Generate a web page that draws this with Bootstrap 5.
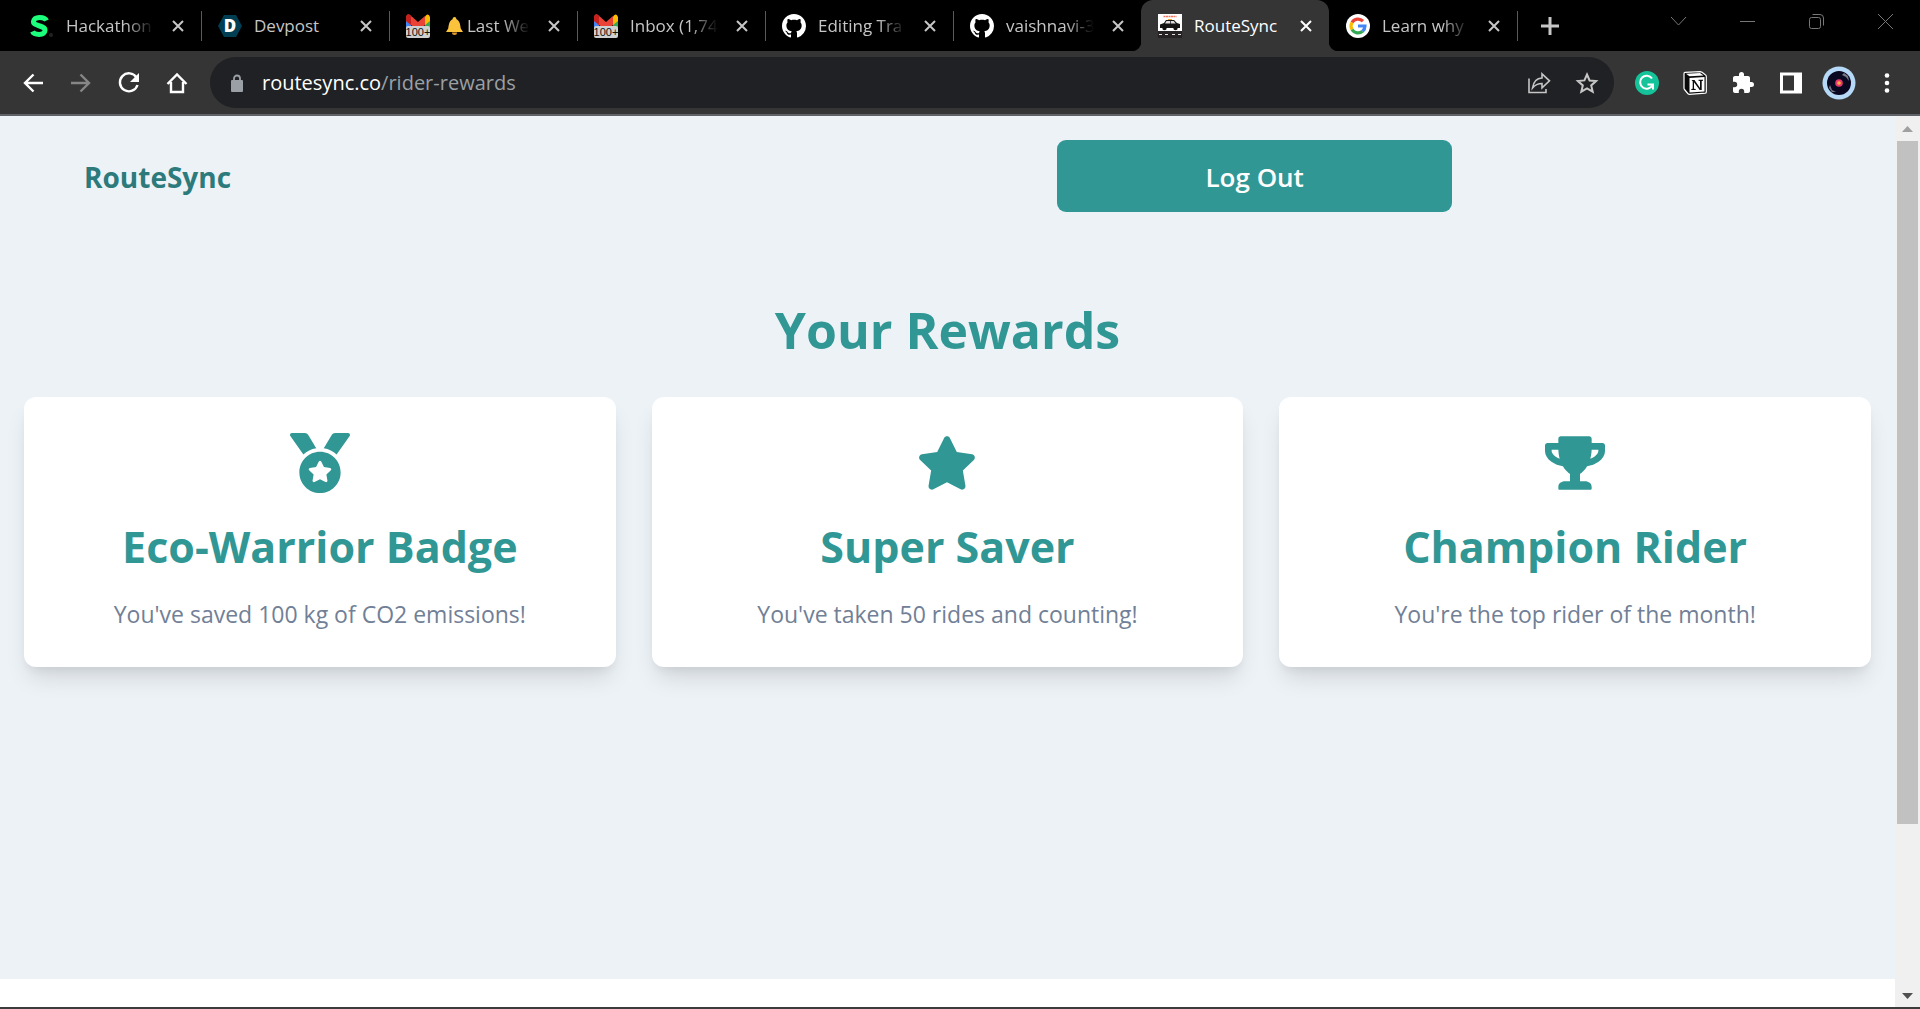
<!DOCTYPE html>
<html lang="en">
<head>
<meta charset="utf-8">
<meta name="viewport" content="width=device-width, initial-scale=1">
<title>RouteSync</title>
<link href="https://cdn.jsdelivr.net/npm/bootstrap@5.3.0/dist/css/bootstrap.min.css" rel="stylesheet">
<style>
  :root { --teal: #319795; --chrome: #353535; --page: #edf2f7; }
  body { font-family: "Open Sans", "Noto Sans", sans-serif; background: #fff; }
  svg { display: block; flex: none; }
  button.plain { border: 0; background: none; padding: 0; color: inherit; }
  .tabstrip { height: 51px; background: #000; padding-left: 13px; }
  .tab-item { flex: 0 0 188px; height: 51px; padding-left: 17px; color: #c6c6c6; position: relative; }
  .tab-item.ruled::after { content: ""; position: absolute; right: -1px; top: 11px; width: 1px; height: 30px; background: #5a5a5a; }
  .tab-item.current { background: var(--chrome); color: #fff; border-radius: 12px 12px 0 0; }
  .tab-item.current::before, .tab-item.current::after { content: ""; position: absolute; bottom: 0; width: 10px; height: 10px; }
  .tab-item.current::before { left: -10px; background: radial-gradient(circle at 0 0, #000 10px, var(--chrome) 11px); }
  .tab-item.current::after { right: -10px; background: radial-gradient(circle at 100% 0, #000 10px, var(--chrome) 11px); }
  .tab-title { flex: 0 0 88px; margin: 0 16px 0 12px; font-size: 17px; line-height: 24px; color: inherit; text-decoration: none; white-space: nowrap; overflow: hidden; }
  .tab-title.fade-end { -webkit-mask-image: linear-gradient(90deg, #000 68%, transparent); mask-image: linear-gradient(90deg, #000 68%, transparent); }
  .win-controls { gap: 46px; padding: 10px 23px 0 0; color: #777; }
  .toolbar { height: 65px; background: var(--chrome); border-bottom: 2px solid #5f6368; padding: 0 21px; gap: 24px; color: #fff; }
  .profile-btn { margin: 0 -5px; }
  .omnibox { background: #202124; border-radius: 26px; height: 51px; margin: 0 -3px; padding: 0 15px 0 18px; color: #c6c6c6; }
  .address { font-size: 20px; line-height: 28px; color: #fff; }
  .address .path { color: #9aa0a6; }
  .viewport-row { min-height: 0; border-bottom: 2px solid #3c3c3c; }
  .rewards-page { background: var(--page); margin-bottom: 28px; }
  .site-nav { padding: 24px 0; }
  .brand-cell { flex: 0 0 56%; padding: 2px 0 0 84px; margin-right: -4px; }
  .brand-link { font-size: 28px; line-height: 36px; font-weight: 700; color: #2c7a7b; text-decoration: none; }
  .logout { width: 21%; max-width: 395px; height: 72px; padding-top: 8px; border-radius: 9px; background: var(--teal); color: #fff; font-size: 26px; font-weight: 600; }
  .logout:hover { background: #2c7a7b; color: #fff; }
  .page-title { font-size: 50px; line-height: 64px; font-weight: 700; color: var(--teal); margin: 62px 0 35px; }
  .reward-grid { display: grid; grid-template-columns: repeat(3, 1fr); gap: 36px; padding: 0 24px; }
  .reward { border: 0; border-radius: 12px; padding: 36px 36px 35px; align-items: center; text-align: center; box-shadow: 0 15px 23px -5px rgba(0,0,0,.12), 0 6px 9px -3px rgba(0,0,0,.06); }
  .reward svg { fill: var(--teal); }
  .reward h2 { font-size: 43px; line-height: 54px; font-weight: 700; color: var(--teal); margin: 27px 0 22px; }
  .reward p { font-size: 23px; line-height: 36px; color: #718096; margin: 0; }
  .scroll-rail { width: 25px; background: #f0f0f0; padding: 10px 2px 8px; }
  .scroll-thumb { flex: 0 1 683px; background: #c1c1c1; margin-top: 9px; }
</style>
</head>
<body class="d-flex flex-column vh-100 overflow-hidden">

<svg width="0" height="0" class="position-absolute" aria-hidden="true">
  <symbol id="x" viewBox="0 0 16 16"><path d="M3 3l10 10M13 3L3 13" stroke="currentColor" stroke-width="2" fill="none"/></symbol>
  <symbol id="gmail" viewBox="0 0 24 24">
    <path d="M0 3h5v16H0z" fill="#4285f4"/><path d="M19 3h5v16h-5z" fill="#34a853"/>
    <path d="M19 5V2.500Q22-1.500 24 3v4l-5 4z" fill="#fbbc04"/><path d="M0 7V3q1-4 4-2l8 7 7-6v9l-7 5.500L5 11z" fill="#ea4335"/><path d="M0 7V3q1-4 4-2l1 1v9z" fill="#c5221f"/>
    <rect y="12" width="24" height="12" rx="2" fill="#d0d0d0"/>
    <text x="12" y="22" font-family="Liberation Sans, sans-serif" font-size="11" text-anchor="middle" fill="#111">100+</text>
  </symbol>
  <symbol id="github" viewBox="0 0 16 16"><circle cx="8" cy="8" r="7.500" fill="#000"/><path fill="#fff" d="M8 0C3.580 0 0 3.580 0 8c0 3.540 2.290 6.530 5.470 7.590.4.070.55-.17.55-.38 0-.19-.01-.82-.01-1.490-2.010.37-2.530-.49-2.690-.94-.09-.23-.48-.94-.82-1.130-.28-.15-.68-.52-.01-.53.63-.01 1.080.58 1.230.82.72 1.210 1.870.87 2.330.66.07-.52.28-.87.51-1.070-1.780-.2-3.640-.89-3.640-3.950 0-.87.31-1.590.82-2.150-.08-.2-.36-1.020.08-2.120 0 0 .67-.21 2.200.82.64-.18 1.320-.27 2-.27s1.360.09 2 .27c1.530-1.040 2.200-.82 2.200-.82.44 1.100.16 1.920.08 2.120.51.56.82 1.270.82 2.150 0 3.070-1.870 3.750-3.650 3.950.29.25.54.73.54 1.480 0 1.070-.01 1.930-.01 2.200 0 .21.15.46.55.38A8.010 8.010 0 0 0 16 8c0-4.420-3.580-8-8-8z"/></symbol>
</svg>

<header>
  <div class="tabstrip d-flex">
    <div class="tab-item ruled d-flex align-items-center">
      <svg width="24" height="24" viewBox="0 0 24 24"><path d="M16.500 6.500C15 3 4.500 1.500 3.500 7.500c-.6 5 12 3.500 11.500 9-.6 5.500-11 4.500-12.500 1" fill="none" stroke="#1bff7c" stroke-width="5"/><circle cx="21" cy="21" r="2" fill="#222"/></svg>
      <a href="#" class="tab-title fade-end">Hackathon</a>
      <button class="plain" aria-label="Close tab"><svg width="16" height="16"><use href="#x"/></svg></button>
    </div>
    <div class="tab-item ruled d-flex align-items-center">
      <svg width="24" height="24" viewBox="0 0 24 24"><path d="M6 1h12l6 11-6 11H6L0 12z" fill="#003e54"/><text x="12" y="18" text-anchor="middle" font-family="Open Sans, sans-serif" font-weight="800" font-size="17" fill="#fff">D</text></svg>
      <a href="#" class="tab-title">Devpost</a>
      <button class="plain" aria-label="Close tab"><svg width="16" height="16"><use href="#x"/></svg></button>
    </div>
    <div class="tab-item ruled d-flex align-items-center">
      <svg width="24" height="24"><use href="#gmail"/></svg>
      <a href="#" class="tab-title fade-end d-flex align-items-center ps-1"><svg width="17" height="18" viewBox="0 0 17 18" class="me-1"><path d="M8.500 0c1.500 0 1.800 1 1.800 2 4 2 4 7 4.500 9.500L17 15H0l2.200-3.500C2.700 9 2.700 4 6.700 2c0-1 .3-2 1.800-2z" fill="#fbc23c"/><path d="M6 15.500h5a2.500 2.500 0 0 1-5 0z" fill="#e59a2c"/></svg>Last We</a>
      <button class="plain" aria-label="Close tab"><svg width="16" height="16"><use href="#x"/></svg></button>
    </div>
    <div class="tab-item ruled d-flex align-items-center">
      <svg width="24" height="24"><use href="#gmail"/></svg>
      <a href="#" class="tab-title fade-end">Inbox (1,74</a>
      <button class="plain" aria-label="Close tab"><svg width="16" height="16"><use href="#x"/></svg></button>
    </div>
    <div class="tab-item ruled d-flex align-items-center">
      <svg width="24" height="24"><use href="#github"/></svg>
      <a href="#" class="tab-title fade-end">Editing Tra</a>
      <button class="plain" aria-label="Close tab"><svg width="16" height="16"><use href="#x"/></svg></button>
    </div>
    <div class="tab-item d-flex align-items-center">
      <svg width="24" height="24"><use href="#github"/></svg>
      <a href="#" class="tab-title fade-end">vaishnavi-3</a>
      <button class="plain" aria-label="Close tab"><svg width="16" height="16"><use href="#x"/></svg></button>
    </div>
    <div class="tab-item current d-flex align-items-center">
      <svg width="24" height="24" viewBox="0 0 24 24"><path d="M0 0h24v17H0z" fill="#fff"/><path d="M0 17h24v7H0z" fill="#262223"/><path d="M5.500 2.500h13" stroke="#f0745a" stroke-width="1.500" stroke-dasharray="2 .5"/><path d="M2 10.500l4-1.500 2-3h8l3 3 3 1v4H2z" fill="#151515"/><path d="M8.500 7H12v2.500H7zM12.700 7h3l2 2.500h-5z" fill="#ddd"/><path d="M10 5h4v1h-4z" fill="#f5a623"/><circle cx="6.500" cy="14" r="2.200" fill="#111"/><circle cx="17.500" cy="14" r="2.200" fill="#111"/><path d="M1 20.500h3m3 0h3m4 0h3m3 0h3" stroke="#ddd" stroke-width="1"/></svg>
      <a href="#" class="tab-title">RouteSync</a>
      <button class="plain" aria-label="Close tab"><svg width="16" height="16"><use href="#x"/></svg></button>
    </div>
    <div class="tab-item ruled d-flex align-items-center">
      <svg width="24" height="24" viewBox="0 0 24 24"><circle cx="12" cy="12" r="12" fill="#fff"/><g fill="none" stroke-width="3.200"><path d="M17 7.200A7 7 0 0 0 6 8.500" stroke="#ea4335"/><path d="M6 8.500a7 7 0 0 0 0 7" stroke="#fbbc04"/><path d="M6 15.500a7 7 0 0 0 10.600 1.700" stroke="#34a853"/><path d="M16.600 17.200A7 7 0 0 0 19 12h-7" stroke="#4285f4"/></g></svg>
      <a href="#" class="tab-title fade-end">Learn why</a>
      <button class="plain" aria-label="Close tab"><svg width="16" height="16"><use href="#x"/></svg></button>
    </div>
    <button class="plain text-light ms-4 px-0" aria-label="New tab"><svg width="18" height="18" viewBox="0 0 18 18"><path d="M9 0v18M0 9h18" stroke="#c6c6c6" stroke-width="3"/></svg></button>
    <div class="win-controls d-flex align-items-start ms-auto">
      <button class="plain" aria-label="Search tabs"><svg width="23" height="23" viewBox="0 0 23 23"><path d="M4 7l7.500 8L19 7" fill="none" stroke="currentColor"/></svg></button>
      <button class="plain" aria-label="Minimize"><svg width="23" height="23" viewBox="0 0 23 23"><path d="M4 11.500h15" stroke="currentColor"/></svg></button>
      <button class="plain" aria-label="Restore"><svg width="23" height="23" viewBox="0 0 23 23"><rect x="4.500" y="7.500" width="11" height="11" rx="2" fill="none" stroke="currentColor"/><path d="M7.500 4.500H15q3.500 0 3.500 3.500v7.500" fill="none" stroke="currentColor"/></svg></button>
      <button class="plain" aria-label="Close window"><svg width="23" height="23" viewBox="0 0 23 23"><path d="M4 4l15 15M19 4L4 19" stroke="currentColor"/></svg></button>
    </div>
  </div>

  <div class="toolbar d-flex align-items-center">
    <button class="plain" aria-label="Back"><svg width="24" height="24" viewBox="0 0 24 24"><path d="M22 12H4M12.500 3.500L4 12l8.500 8.500" fill="none" stroke="#fff" stroke-width="2.400"/></svg></button>
    <button class="plain" aria-label="Forward"><svg width="24" height="24" viewBox="0 0 24 24"><path d="M2 12h18M11.500 3.500L20 12l-8.500 8.500" fill="none" stroke="#868686" stroke-width="2.400"/></svg></button>
    <button class="plain" aria-label="Reload"><svg width="24" height="24" viewBox="0 0 24 24"><path d="M19.500 6.500A9 9 0 1 0 20.500 14" fill="none" stroke="#fff" stroke-width="2.400"/><path d="M22 2v9h-9z" fill="#fff"/></svg></button>
    <button class="plain" aria-label="Home"><svg width="24" height="24" viewBox="0 0 24 24"><path d="M2.500 13L12 3.500l9.500 9.500M6 11v10h12V11" fill="none" stroke="#fff" stroke-width="2.400"/></svg></button>
    <div class="omnibox flex-grow-1 d-flex align-items-center">
      <svg width="18" height="24" viewBox="0 0 18 24"><path d="M4 9h10q1 0 1 1v10q0 1-1 1H4q-1 0-1-1V10q0-1 1-1z" fill="#9aa0a6"/><path d="M6 10V7.500a3 3 0 0 1 6 0V10" fill="none" stroke="#9aa0a6" stroke-width="1.800"/></svg>
      <a href="#" class="address text-decoration-none ms-3 me-auto">routesync.co<span class="path">/rider-rewards</span></a>
      <button class="plain me-4" aria-label="Share"><svg width="24" height="24" viewBox="0 0 24 24"><path d="M2 7.500V21.500h17V18" fill="none" stroke="currentColor" stroke-width="1.600"/><path d="M5.500 17C6.500 10 10 7.300 15 7V2.800l7.500 7-7.500 7V12.500c-4.500 0-7 1.500-9.500 4.500z" fill="none" stroke="currentColor" stroke-width="1.600"/></svg></button>
      <button class="plain" aria-label="Bookmark"><svg width="24" height="24" viewBox="0 0 24 24"><path d="M12 3.500l2.600 6 6.500.6-4.900 4.300 1.500 6.300-5.700-3.400-5.700 3.400 1.500-6.300L2.900 10l6.500-.6z" fill="none" stroke="currentColor" stroke-width="2"/></svg></button>
    </div>
    <button class="plain" aria-label="Grammarly"><svg width="24" height="24" viewBox="0 0 24 24"><circle cx="12" cy="12" r="12" fill="#15c39a"/><path d="M17 7.500A6.500 6.500 0 1 0 17.500 14M12.500 13.500h5.500v5" fill="none" stroke="#fff" stroke-width="2"/></svg></button>
    <button class="plain" aria-label="Notion"><svg width="24" height="24" viewBox="0 0 24 24"><path d="M1 2.500Q1 1.500 2 1.400L17 .6q1 0 2 .7l3.300 2.500q1 .7 1 1.700v15.500q0 1-1 1.100L6.500 23.300q-1 0-1.700-.8L1.500 18.500Q1 18 1 17z" fill="#0a0a0a" stroke="#fff" stroke-width="1.200"/><path d="M6.500 7l15-.9v14.400l-15 .9z" fill="#fff"/><path d="M3 2.800l14-.8 3.500 2.500-14 .8z" fill="#fff"/><path d="M8.500 9h3l5.500 8V10l-1.500-.3V8.700h4.500v1l-1.300.3v9h-2L11 11.200v6.600l1.700.3v1H8.300v-1l1.400-.3V10.300z" fill="#0a0a0a"/></svg></button>
    <button class="plain" aria-label="Extensions"><svg width="24" height="24" viewBox="0 0 24 24"><path d="M20.500 11H19V7c0-1.100-.9-2-2-2h-4V3.500a2.500 2.500 0 0 0-5 0V5H4c-1.100 0-2 .9-2 2v3.800h1.500a2.700 2.700 0 0 1 0 5.400H2V20c0 1.100.9 2 2 2h3.800v-1.500a2.700 2.700 0 0 1 5.400 0V22H17c1.100 0 2-.9 2-2v-4h1.500a2.500 2.500 0 0 0 0-5z" fill="#fff"/></svg></button>
    <button class="plain" aria-label="Side panel"><svg width="24" height="24" viewBox="0 0 24 24"><path d="M1 1.500h22v21H1zM4 4.500v15h11v-15z" fill="#fff" fill-rule="evenodd"/></svg></button>
    <button class="plain profile-btn" aria-label="Profile"><svg width="34" height="34" viewBox="0 0 34 34"><circle cx="17" cy="17" r="16.500" fill="#b5d9f7"/><circle cx="17" cy="17" r="12" fill="#0a0820"/><path d="M20 9l4 2 3 4-1-5-4-3zM8 19l2 5 4 2-4 0-3-4z" fill="#777a86"/><circle cx="17" cy="17" r="3.800" fill="#e8366f"/><circle cx="17" cy="17" r="1.800" fill="#ffb13b"/></svg></button>
    <button class="plain" aria-label="Menu"><svg width="24" height="24" viewBox="0 0 24 24" fill="#fff"><circle cx="12" cy="4.500" r="2.300"/><circle cx="12" cy="12" r="2.300"/><circle cx="12" cy="19.500" r="2.300"/></svg></button>
  </div>
</header>

<div class="viewport-row d-flex flex-grow-1">
  <main class="rewards-page flex-grow-1">
    <nav class="site-nav d-flex align-items-center">
      <div class="brand-cell"><a href="#" class="brand-link">RouteSync</a></div>
      <button class="btn logout">Log Out</button>
    </nav>
    <h1 class="page-title text-center">Your Rewards</h1>
    <section class="reward-grid">
      <article class="card reward">
        <svg width="60" height="60" viewBox="0 0 512 512"><path d="M223.750 130.750L154.620 15.540A31.997 31.997 0 0 0 127.180 0H16.030C3.080 0-4.500 14.570 2.920 25.180l111.270 158.960c29.720-27.770 67.520-46.830 109.560-53.390zM495.970 0H384.820c-11.240 0-21.660 5.900-27.440 15.540l-69.130 115.210c42.040 6.560 79.840 25.620 109.560 53.380L509.080 25.180C516.500 14.570 508.920 0 495.970 0zM256 160c-97.200 0-176 78.800-176 176s78.800 176 176 176 176-78.800 176-176-78.800-176-176-176zm92.520 157.260l-37.930 36.960 8.970 52.220c1.600 9.360-8.260 16.510-16.650 12.090L256 393.880l-46.900 24.650c-8.400 4.450-18.250-2.740-16.650-12.090l8.970-52.220-37.930-36.960c-6.820-6.640-3.050-18.230 6.350-19.590l52.430-7.640 23.430-47.520c2.110-4.280 6.190-6.390 10.280-6.390 4.110 0 8.220 2.140 10.330 6.390l23.430 47.520 52.430 7.640c9.400 1.360 13.170 12.950 6.350 19.590z"/></svg>
        <h2>Eco-Warrior Badge</h2>
        <p>You've saved 100 kg of CO2 emissions!</p>
      </article>
      <article class="card reward">
        <svg width="60" height="60" viewBox="0 0 576 512"><path d="M259.300 17.800L194 150.200 47.900 171.500c-26.200 3.800-36.700 36.100-17.700 54.600l105.700 103-25 145.500c-4.500 26.300 23.200 46 46.400 33.700L288 439.600l130.700 68.700c23.200 12.200 50.900-7.400 46.400-33.700l-25-145.500 105.700-103c19-18.500 8.500-50.800-17.700-54.600L382 150.200 316.700 17.800c-11.700-23.600-45.600-23.900-57.400 0z"/></svg>
        <h2>Super Saver</h2>
        <p>You've taken 50 rides and counting!</p>
      </article>
      <article class="card reward">
        <svg width="60" height="60" viewBox="0 0 576 512"><path d="M552 64H448V24c0-13.300-10.700-24-24-24H152c-13.300 0-24 10.700-24 24v40H24C10.700 64 0 74.700 0 88v56c0 35.700 22.500 72.400 61.900 100.700 31.500 22.700 69.800 37.100 110 41.700C203.300 338.500 240 360 240 360v72h-48c-35.300 0-64 20.700-64 56v12c0 6.600 5.400 12 12 12h296c6.600 0 12-5.400 12-12v-12c0-35.300-28.700-56-64-56h-48v-72s36.700-21.500 68.100-73.600c40.300-4.600 78.600-19 110-41.700 39.300-28.300 61.900-65 61.900-100.700V88c0-13.300-10.700-24-24-24zM99.300 192.800C74.900 175.200 64 155.600 64 144v-16h64.200c1 32.600 5.800 61.200 12.800 86.200-15.100-5.200-29.200-12.400-41.700-21.400zM512 144c0 16.100-17.700 36.100-35.300 48.800-12.500 9-26.700 16.200-41.800 21.400 7-25 11.800-53.600 12.800-86.200H512v16z"/></svg>
        <h2>Champion Rider</h2>
        <p>You're the top rider of the month!</p>
      </article>
    </section>
  </main>
  <div class="scroll-rail d-flex flex-column flex-shrink-0" aria-hidden="true">
    <svg class="mx-auto" width="11" height="6" viewBox="0 0 11 6"><path d="M5.500 0L11 6H0z" fill="#a0a0a0"/></svg>
    <div class="scroll-thumb"></div>
    <svg class="mx-auto mt-auto" width="11" height="6" viewBox="0 0 11 6"><path d="M0 0h11L5.500 6z" fill="#505050"/></svg>
  </div>
</div>

<script src="https://cdn.jsdelivr.net/npm/bootstrap@5.3.0/dist/js/bootstrap.bundle.min.js"></script>
</body>
</html>
